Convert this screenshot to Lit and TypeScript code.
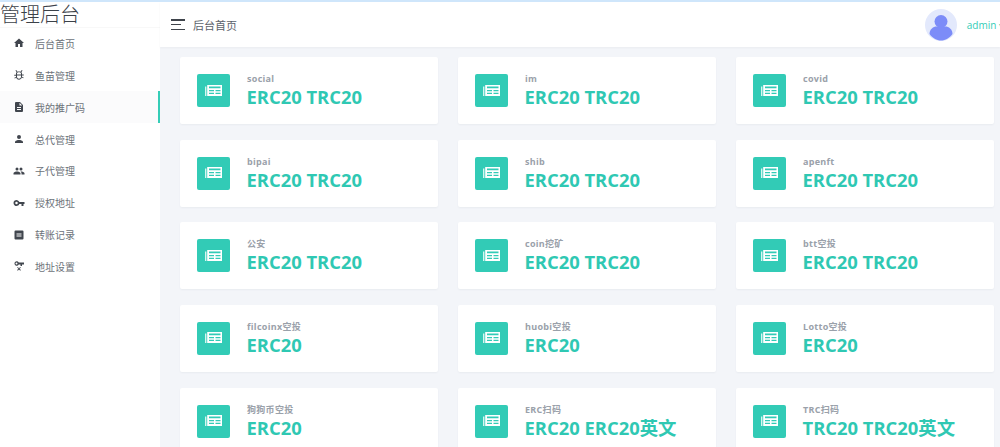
import { LitElement, html, css, svg } from "lit";
import { customElement } from "lit/decorators.js";

const icons: Record<string, any> = {
  home: svg`<path d="M10 20v-6h4v6h5v-8h3L12 3 2 12h3v8z"/>`,
  fish: svg`<path fill-rule="evenodd" d="M6.500 2l2.600 3.300C10 5 11 4.800 12 4.800s2 .2 2.900.5L17.500 2l1.600 1.200-2.500 3.200c.9.7 1.400 1.600 1.400 2.600v2.200h3.500v1.800H18v2.400l3.300 1.700-.8 1.600-2.900-1.500C16.700 20 14.600 21.500 12 21.500S7.300 20 6.400 17.600l-2.900 1.500-.8-1.600L6 15.800v-2.400H2.500v-1.800H6V9c0-1 .5-1.900 1.400-2.600L4.900 3.200zM8 9v2.200h8V9c0-1.200-1.800-2.300-4-2.300S8 7.800 8 9zm0 4v2.500c0 2.300 1.800 4 4 4s4-1.700 4-4V13z"/>`,
  doc: svg`<path d="M14 2H6a2 2 0 0 0-2 2v16a2 2 0 0 0 2 2h12a2 2 0 0 0 2-2V8zM8 12h8v2H8zm0 4h8v2H8zm5-7V3.500L18.500 9z" fill-rule="evenodd"/>`,
  person: svg`<path d="M12 12a4 4 0 1 0 0-8 4 4 0 0 0 0 8zm0 2c-2.700 0-8 1.300-8 4v2h16v-2c0-2.700-5.300-4-8-4z"/>`,
  people: svg`<path d="M16 11a3 3 0 1 0 0-6 3 3 0 0 0 0 6zm-8 0a3 3 0 1 0 0-6 3 3 0 0 0 0 6zm0 2c-2.300 0-7 1.200-7 3.500V19h14v-2.500C15 14.200 10.300 13 8 13zm8 0c-.3 0-.6 0-1 .1 1.200.8 2 2 2 3.400V19h6v-2.500c0-2.300-4.700-3.500-7-3.500z"/>`,
  key: svg`<path d="M12.650 10A6 6 0 1 0 12.650 14H17v4h4v-4h2v-4zM7 14.500a2.500 2.500 0 1 1 0-5 2.500 2.500 0 0 1 0 5z" fill-rule="evenodd"/>`,
  list: svg`<path d="M19 3H5a2 2 0 0 0-2 2v14a2 2 0 0 0 2 2h14a2 2 0 0 0 2-2V5a2 2 0 0 0-2-2zm-2 12H7v-2h10zm0-4H7V9h10z" fill-rule="evenodd"/>`,
  keyx: svg`<path d="M11.500 5A4.500 4.500 0 1 0 11.500 9H15v3h3V9h4V5zM7 9a2 2 0 1 1 0-4 2 2 0 0 1 0 4z" fill-rule="evenodd"/><path d="M9.500 14l2.500 2.500 2.500-2.500 1.200 1.200-2.500 2.500 2.500 2.500-1.200 1.200L12 19l-2.500 2.400-1.200-1.200 2.500-2.500-2.500-2.500z"/>`,
};

const menu = [
  ["home", "后台首页"],
  ["fish", "鱼苗管理"],
  ["doc", "我的推广码"],
  ["person", "总代管理"],
  ["people", "子代管理"],
  ["key", "授权地址"],
  ["list", "转账记录"],
  ["keyx", "地址设置"],
];

const cards = [
  ["social", "ERC20 TRC20"],
  ["im", "ERC20 TRC20"],
  ["covid", "ERC20 TRC20"],
  ["bipai", "ERC20 TRC20"],
  ["shib", "ERC20 TRC20"],
  ["apenft", "ERC20 TRC20"],
  ["公安", "ERC20 TRC20"],
  ["coin挖矿", "ERC20 TRC20"],
  ["btt空投", "ERC20 TRC20"],
  ["filcoinx空投", "ERC20"],
  ["huobi空投", "ERC20"],
  ["Lotto空投", "ERC20"],
  ["狗狗币空投", "ERC20"],
  ["ERC扫码", "ERC20 ERC20英文"],
  ["TRC扫码", "TRC20 TRC20英文"],
];

@customElement("app-root")
export class AppRoot extends LitElement {
  static styles = css`
    :host {
      display: block;
      width: 1000px;
      height: 447px;
      overflow: hidden;
      background: #f3f5f9;
      font-family: "Open Sans", "Noto Sans CJK SC", sans-serif;
      color: #5b626b;
    }
    .topline { height: 2px; background: #cfe6fb; }
    .shell { display: flex; height: 445px; }
    .side {
      width: 160px;
      flex: none;
      background: #fff;
      display: flex;
      flex-direction: column;
    }
    .brand {
      height: 24.500px;
      font-size: 20px;
      line-height: 24px;
      font-weight: 300;
      color: #3b4148;
      border-bottom: 1px solid #f8f8f8;
      white-space: nowrap;
      font-family: "Noto Sans CJK SC", sans-serif;
    }
    .menu { display: flex; flex-direction: column; }
    .item {
      height: 31.860px;
      display: flex;
      align-items: center;
      gap: 10px;
      padding-left: 13px;
      font-size: 10px;
      color: #6c7279;
      box-sizing: border-box;
    }
    .item svg { width: 12px; height: 12px; fill: #41464e; flex: none; }
    .item.active {
      background: #fbfbfc;
      border-right: 2px solid #35cdb7;
    }
    .main { flex: 1; min-width: 0; display: flex; flex-direction: column; }
    .head {
      flex: none;
      height: 45px;
      background: #fff;
      display: flex;
      align-items: center;
      padding-left: 11px;
      gap: 8px;
      font-size: 11px;
      color: #5b626b;
      box-shadow: 0 1px 2px rgba(0, 0, 0, 0.04);
    }
    .burger { width: 14px; height: 11px; display: flex; flex-direction: column; justify-content: space-between; }
    .burger i { display: block; height: 1.500px; background: #3f444b; }
    .burger i:nth-child(2) { width: 10px; }
    .user {
      margin-left: auto;
      display: flex;
      align-items: center;
      gap: 10px;
      color: #35cdb7;
      font-size: 10px;
      margin-right: -4px;
      white-space: nowrap;
    }
    .avatar { width: 32px; height: 32px; display: block; }
    .grid {
      display: grid;
      grid-template-columns: repeat(3, 258px);
      column-gap: 20px;
      row-gap: 15.670px;
      padding: 10px 0 0 20px;
    }
    .card {
      height: 67px;
      background: #fff;
      border-radius: 2px;
      box-shadow: 0 1px 2px rgba(40, 50, 70, 0.05);
      display: flex;
      align-items: center;
      gap: 17px;
      padding-left: 17px;
    }
    .tile {
      width: 33px;
      height: 33px;
      border-radius: 2px;
      background: #32cbb6;
      display: flex;
      align-items: center;
      justify-content: center;
      flex: none;
    }
    .tile svg { width: 17px; height: 11px; display: block; margin-bottom: 1px; }
    .label {
      font-size: 9px;
      line-height: 12px;
      margin-bottom: 1px;
      font-weight: 700;
      color: #9aa1aa;
      letter-spacing: 0.3px;
    }
    .value {
      font-size: 18.400px;
      line-height: 22px;
      font-weight: 700;
      color: #2fc8b3;
      white-space: nowrap;
      margin-left: -0.500px;
    }
  `;

  render() {
    return html`
      <div class="topline"></div>
      <div class="shell">
        <aside class="side">
          <div class="brand">管理后台</div>
          <nav class="menu">
            ${menu.map(
              ([ic, t], i) => html`<div class="item ${i === 2 ? "active" : ""}">
                <svg viewBox="0 0 24 24">${icons[ic]}</svg><span>${t}</span>
              </div>`
            )}
          </nav>
        </aside>
        <div class="main">
          <header class="head">
            <div class="burger"><i></i><i></i><i></i></div>
            <span>后台首页</span>
            <div class="user">
              <svg class="avatar" viewBox="0 0 32 32">
                <circle cx="16" cy="16" r="16" fill="#e3e9fc" />
                <circle cx="16" cy="12.500" r="6.500" fill="#7c8cf8" />
                <path d="M4.500 25c0-5 4-7.500 7-7.500h9c3 0 7 2.500 7 7.500-3 4-7 6.500-11.500 6.500S7.500 29 4.500 25z" fill="#7c8cf8" />
              </svg>
              <span>admin ▾</span>
            </div>
          </header>
          <div class="grid">
            ${cards.map(
              ([l, v]) => html`<div class="card">
                <div class="tile">
                  <svg viewBox="0 0 17 11">
                    <path fill="#fff" fill-rule="evenodd" d="M2.200 0H17V11H2.200zM4 1.500v1.800h11.500V1.500zM4 5v1.300h5V5zM10.500 5v1.300h5V5zM4 7.800v1.300h5V7.800zM10.500 7.800v1.300h5V7.800z"/>
                    <path fill="#fff" opacity="0.8" d="M0 1.500h1.400V11H0z"/>
                  </svg>
                </div>
                <div class="text">
                  <div class="label">${l}</div>
                  <div class="value">${v}</div>
                </div>
              </div>`
            )}
          </div>
        </div>
      </div>
    `;
  }
}
